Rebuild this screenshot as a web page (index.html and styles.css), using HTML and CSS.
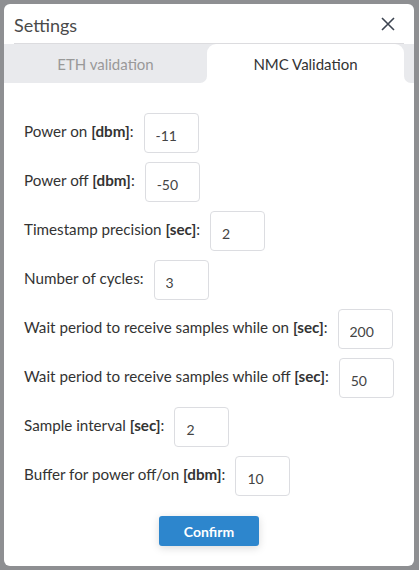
FILE: index.html
```html
<!DOCTYPE html>
<html lang="en">
<head>
    <meta charset="UTF-8">
    <title>Settings</title>
    <link rel="stylesheet" href="styles.css">
</head>
<body>
<div class="modal">
    <div class="head">
        <span class="title">Settings</span>
        <svg class="close" width="14" height="14" viewBox="0 0 14 14"><path d="M1 1L13 13M13 1L1 13" stroke="#3d4451" stroke-width="1.6" fill="none"/></svg>
    </div>
    <div class="tabs">
        <div class="tab off">ETH validation</div>
        <div class="tab-on"><div class="tab">NMC Validation</div></div>
        <div class="tab-fill"></div>
    </div>
    <div class="content">
        <div class="row"><label>Power on <b>[dbm]</b>:</label><input type="text" value="-11"></div>
        <div class="row"><label>Power off <b>[dbm]</b>:</label><input type="text" value="-50"></div>
        <div class="row"><label>Timestamp precision <b>[sec]</b>:</label><input type="text" value="2"></div>
        <div class="row"><label>Number of cycles:</label><input type="text" value="3"></div>
        <div class="row"><label>Wait period to receive samples while on <b>[sec]</b>:</label><input type="text" value="200"></div>
        <div class="row"><label>Wait period to receive samples while off <b>[sec]</b>:</label><input type="text" value="50"></div>
        <div class="row"><label>Sample interval <b>[sec]</b>:</label><input type="text" value="2"></div>
        <div class="row"><label>Buffer for power off/on <b>[dbm]</b>:</label><input type="text" value="10"></div>
        <div class="foot"><button>Confirm</button></div>
    </div>
</div>
</body>
</html>
```

FILE: styles.css
```css
*{
    margin:0;
    padding:0;
    box-sizing:border-box;
}
body{
    background-color:#8e8f92;
    font-family:Lato, "Noto Sans", sans-serif;
    color:#333;
    padding:4px 5px 4px 4px;
}
.modal{
    background-color:white;
    border-radius:6px;
    width:410px;
    height:562px;
    overflow:hidden;
}
.head{
    margin:0 10px;
    height:40px;
    border-bottom:1px solid #dcdcdf;
    display:flex;
    align-items:center;
    justify-content:space-between;
    padding-right:9px;
}
.title{
    font-size:18px;
    color:#4a4a4a;
    padding-top:2px;
}
.tabs{
    display:flex;
    height:39px;
    background-color:white;
}
.tab{
    height:39px;
    display:flex;
    align-items:center;
    justify-content:center;
    font-size:15px;
    color:#333;
    background-color:white;
    border-radius:9px 9px 0 0;
}
.tab.off{
    width:203px;
    background-color:#e9eaed;
    color:#999;
    border-radius:0 0 7px 0;
}
.tab-on{
    width:197px;
    background-color:#e9eaed;
}
.tab-fill{
    flex:1;
    background-color:#e9eaed;
    border-radius:0 0 0 7px;
}
.content{
    padding:30px 20px 0 20px;
}
.row{
    display:flex;
    align-items:center;
    height:40px;
    margin-bottom:9px;
    font-size:15.2px;
}
.row label{
    padding-bottom:4px;
    margin-right:10px;
}
.row input{
    width:55px;
    height:40px;
    border:1px solid #dcdde1;
    border-radius:4px;
    padding:4px 11px 0 11px;
    font-family:inherit;
    font-size:14px;
    color:#444;
}
.foot{
    display:flex;
    justify-content:center;
    padding-top:11px;
}
.foot button{
    width:100px;
    height:30px;
    border:none;
    border-radius:3px;
    background-color:#2d86cd;
    color:white;
    font-family:inherit;
    font-size:14px;
    font-weight:bold;
    box-shadow:0 2px 8px rgba(0,0,0,0.15);
}
```
